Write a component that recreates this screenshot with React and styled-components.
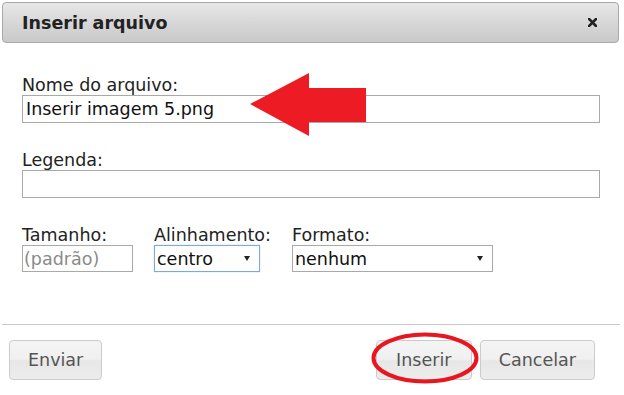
import React from "react";
import styled, { createGlobalStyle } from "styled-components";

const GlobalStyle = createGlobalStyle`
  html, body {
    margin: 0;
    padding: 0;
    background: #fff;
  }

  body {
    font-family: "DejaVu Sans", Verdana, sans-serif;
    font-size: 17.5px;
    color: #111;
  }
`;

const Dialog = styled.div`
  position: relative;
  width: 624px;
  height: 395px;
  overflow: hidden;
  background: #fff;
`;

const TitleBar = styled.div`
  display: flex;
  align-items: center;
  justify-content: space-between;
  box-sizing: border-box;
  height: 41px;
  margin: 2px 5px 0 2px;
  padding: 0 21px 0 19px;
  border: 1px solid #a9a9a9;
  border-radius: 4px;
  background: linear-gradient(to bottom, #e7e7e7 0%, #d6d6d6 55%, #c9c9c9 100%);
`;

const Title = styled.span`
  font-weight: 700;
  font-size: 17.5px;
  color: #222;
  padding-top: 1px;
`;

const CloseButton = styled.button`
  display: flex;
  align-items: center;
  justify-content: center;
  width: 10px;
  height: 10px;
  padding: 0;
  border: none;
  background: transparent;
  cursor: pointer;
`;

const Body = styled.div`
  padding: 32px 24px 0 22px;
`;

const Field = styled.div`
  display: flex;
  flex-direction: column;
  margin-top: ${(p) => (p.$first ? "0" : "27px")};
`;

const Label = styled.label`
  display: block;
  height: 20px;
  line-height: 20px;
  font-size: 17.5px;
  color: #222;
  white-space: nowrap;
`;

const TextInput = styled.input`
  box-sizing: border-box;
  width: ${(p) => p.$width || "100%"};
  height: ${(p) => p.$height || "28px"};
  margin: 0;
  padding: 0 ${(p) => p.$pad || "3px"};
  border: 1px solid #a9a9a9;
  border-radius: 0;
  font-family: "DejaVu Sans", Verdana, sans-serif;
  font-size: 17.5px;
  color: #111;
  background: #fff;
  outline: none;

  &::placeholder {
    color: #8a8a8a;
  }
`;

const Row = styled.div`
  display: flex;
  gap: 21px;
  margin-top: 27px;
`;

const Column = styled.div`
  display: flex;
  flex-direction: column;
`;

const Select = styled.select`
  box-sizing: border-box;
  width: ${(p) => p.$width};
  height: 27px;
  margin: 0;
  padding: 0 20px 0 2px;
  border: 1px solid ${(p) => (p.$focused ? "#7ea8de" : "#a9a9a9")};
  border-radius: 0;
  font-family: "DejaVu Sans", Verdana, sans-serif;
  font-size: 17.5px;
  color: #111;
  appearance: none;
  -webkit-appearance: none;
  outline: none;
  box-shadow: ${(p) => (p.$focused ? "0 0 1px #9fc1ea" : "none")};
  background: #fff
    url("data:image/svg+xml;utf8,<svg xmlns='http://www.w3.org/2000/svg' width='6' height='5'><path d='M0 0 L6 0 L3 5 Z' fill='%23222'/></svg>")
    no-repeat right 9px center;
`;

const Divider = styled.hr`
  height: 0;
  margin: 52px 4px 0 2px;
  border: none;
  border-top: 1px solid #c9c9c9;
`;

const Footer = styled.div`
  display: flex;
  justify-content: space-between;
  align-items: center;
  padding: 15px 29px 0 9px;
`;

const ButtonGroup = styled.div`
  display: flex;
  gap: 8px;
`;

const Button = styled.button`
  box-sizing: border-box;
  height: 40px;
  min-width: ${(p) => p.$min || "0"};
  padding: 0 18px;
  border: 1px solid #cbcbcb;
  border-radius: 4px;
  background: linear-gradient(
    to bottom,
    #f4f4f4 0%,
    #f0f0f0 48%,
    #e7e7e7 52%,
    #ececec 100%
  );
  font-family: "DejaVu Sans", Verdana, sans-serif;
  font-size: 17.5px;
  color: #555;
  cursor: pointer;
`;

const Annotation = styled.svg`
  position: absolute;
  left: ${(p) => p.$x}px;
  top: ${(p) => p.$y}px;
  pointer-events: none;
`;

const CloseIcon = () => (
  <svg width="9" height="9" viewBox="0 0 9 9">
    <path d="M1 1 L8 8 M8 1 L1 8" stroke="#222" strokeWidth="2.6" strokeLinecap="square" />
  </svg>
);

const App = () => {
  return (
    <>
      <GlobalStyle />
      <Dialog>
        <TitleBar>
          <Title>Inserir arquivo</Title>
          <CloseButton aria-label="Fechar">
            <CloseIcon />
          </CloseButton>
        </TitleBar>

        <Body>
          <Field $first>
            <Label>Nome do arquivo:</Label>
            <TextInput defaultValue="Inserir imagem 5.png" />
          </Field>

          <Field>
            <Label>Legenda:</Label>
            <TextInput defaultValue="" />
          </Field>

          <Row>
            <Column>
              <Label>Tamanho:</Label>
              <TextInput $width="111px" $height="27px" $pad="1px" placeholder="(padrão)" />
            </Column>
            <Column>
              <Label>Alinhamento:</Label>
              <Select $width="106px" $focused defaultValue="centro">
                <option value="esquerda">esquerda</option>
                <option value="centro">centro</option>
                <option value="direita">direita</option>
              </Select>
            </Column>
            <Column>
              <Label>Formato:</Label>
              <Select $width="201px" defaultValue="nenhum">
                <option value="nenhum">nenhum</option>
                <option value="miniatura">miniatura</option>
                <option value="moldura">moldura</option>
              </Select>
            </Column>
          </Row>
        </Body>

        <Divider />

        <Footer>
          <Button>Enviar</Button>
          <ButtonGroup>
            <Button $min="96px">Inserir</Button>
            <Button>Cancelar</Button>
          </ButtonGroup>
        </Footer>

        <Annotation $x={250} $y={73} width="116" height="64" viewBox="0 0 116 64">
          <polygon points="0,31 59,0 59,15 116,15 116,49 59,49 59,63" fill="#ed1c24" />
        </Annotation>

        <Annotation $x={371} $y={332} width="108" height="52" viewBox="0 0 108 52">
          <ellipse cx="54" cy="26" rx="51.5" ry="23.5" fill="none" stroke="#e8161f" strokeWidth="4" />
        </Annotation>
      </Dialog>
    </>
  );
};

export default App;
